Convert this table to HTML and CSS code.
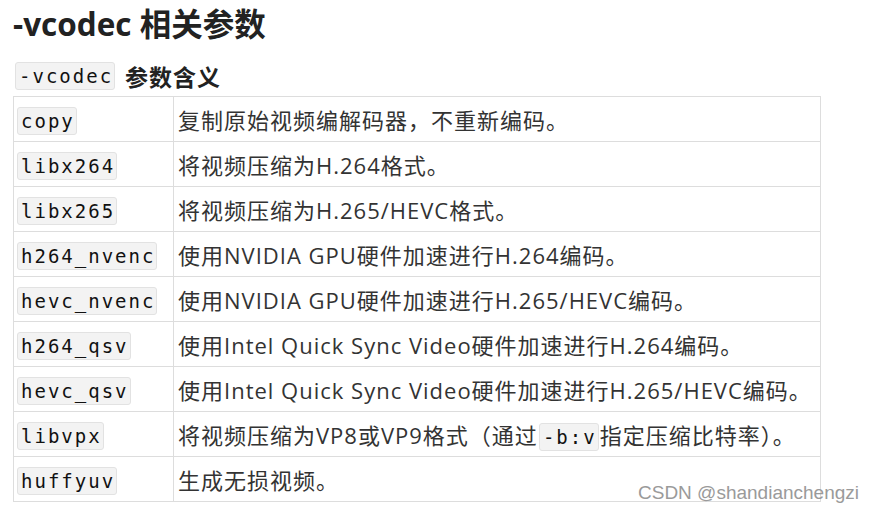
FILE: index.html
```html
<!DOCTYPE html>
<html lang="zh-CN">
<head>
  <meta charset="UTF-8" />
  <title>-vcodec 相关参数</title>
  <link rel="stylesheet" href="styles.css">
</head>
<body>

  <h2 class="title">-vcodec 相关参数</h2>

  <div class="head">
    <code>-vcodec</code>
    <span class="head-text">参数含义</span>
  </div>

  <table class="params">
    <tr><td><code>copy</code></td><td>复制原始视频编解码器，不重新编码。</td></tr>
    <tr><td><code>libx264</code></td><td>将视频压缩为H.264格式。</td></tr>
    <tr><td><code>libx265</code></td><td>将视频压缩为H.265/HEVC格式。</td></tr>
    <tr><td><code>h264_nvenc</code></td><td>使用NVIDIA GPU硬件加速进行H.264编码。</td></tr>
    <tr><td><code>hevc_nvenc</code></td><td>使用NVIDIA GPU硬件加速进行H.265/HEVC编码。</td></tr>
    <tr><td><code>h264_qsv</code></td><td>使用Intel Quick Sync Video硬件加速进行H.264编码。</td></tr>
    <tr><td><code>hevc_qsv</code></td><td>使用Intel Quick Sync Video硬件加速进行H.265/HEVC编码。</td></tr>
    <tr><td><code>libvpx</code></td><td>将视频压缩为VP8或VP9格式（通过<code>-b:v</code>指定压缩比特率）。</td></tr>
    <tr><td><code>huffyuv</code></td><td>生成无损视频。</td></tr>
  </table>

  <div class="watermark">CSDN @shandianchengzi</div>

</body>
</html>
```

FILE: styles.css
```css
body {
  font-family: "Open Sans", "Noto Sans CJK SC", sans-serif;
  color: #222;
  margin: 0;
  padding: 6px 0 0 13px;
  background: #fff;
}

.title {
  font-size: 31.5px;
  line-height: 36px;
  font-weight: bold;
  margin: 0;
}

.head {
  display: flex;
  align-items: center;
  gap: 10px;
  height: 40px;
  margin-top: 14px;
  padding-left: 2px;
}

.head-text {
  font-size: 23px;
  font-weight: bold;
  letter-spacing: 1px;
}

code {
  font-family: "DejaVu Sans Mono", monospace;
  font-size: 19px;
  line-height: 26px;
  letter-spacing: 2px;
  display: inline-block;
  padding: 0 1px 0 3px;
  background: #f3f3f3;
  border: 1px solid #e2e2e2;
  border-radius: 3px;
  color: #111;
}

.params {
  border-collapse: collapse;
  width: 808px;
}

.params td {
  border: 1px solid #dddddd;
  height: 44px;
  padding: 0 0 0 3px;
  font-size: 22px;
  letter-spacing: 1px;
  color: #333;
  vertical-align: middle;
}

.params td:first-child {
  width: 156px;
}

.params td:last-child {
  padding-left: 4px;
}

.params td:last-child code {
  margin: 0 1px;
}

.watermark {
  position: absolute;
  left: 638px;
  top: 482px;
  font-family: "Liberation Sans", sans-serif;
  font-size: 19px;
  color: #9a9a9a;
}
```
